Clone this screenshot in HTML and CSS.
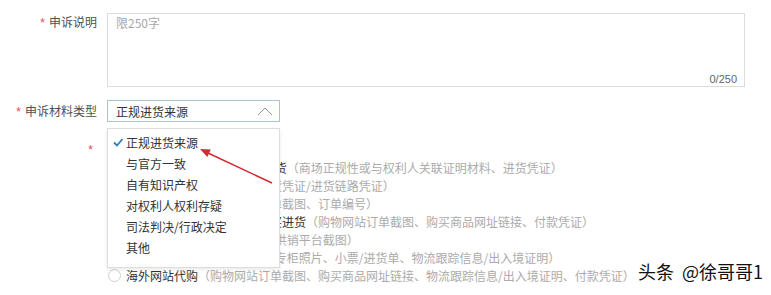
FILE: index.html
```html
<!DOCTYPE html>
<html lang="zh-CN">
<head>
<meta charset="utf-8">
<title>申诉</title>
<link rel="stylesheet" href="styles.css">
</head>
<body>
<div class="page">
  <div class="form-row row-desc">
    <label class="label"><span class="req">*</span>申诉说明</label>
    <div class="textarea">
      <span class="placeholder">限250字</span>
      <span class="count">0/250</span>
    </div>
  </div>

  <div class="form-row row-type">
    <label class="label"><span class="req">*</span>申诉材料类型</label>
    <div class="select-wrap">
      <div class="select">
        <span>正规进货来源</span>
        <svg class="chev" width="16" height="9" viewBox="0 0 16 9"><polyline points="1,8 8,1 15,8" fill="none" stroke="#9a9a9a" stroke-width="1"/></svg>
      </div>
      <ul class="dropdown">
        <li class="active"><svg class="check" width="10" height="9" viewBox="0 0 10 9"><path d="M1 4.5 L4 7.5 L9.5 1" fill="none" stroke="#2c7cc0" stroke-width="1.8"/></svg>正规进货来源</li>
        <li>与官方一致</li>
        <li>自有知识产权</li>
        <li>对权利人权利存疑</li>
        <li>司法判决/行政决定</li>
        <li>其他</li>
      </ul>
    </div>
  </div>

  <div class="form-row row-source">
    <label class="label"><span class="req">*</span></label>
    <div class="radios">
      <div class="radio-row"><span class="radio"></span><span class="opt">品牌方授权</span></div>
      <div class="radio-row"><span class="radio"></span><span class="opt">商场/专柜或品牌授权渠道进货</span><span class="desc">（商场正规性或与权利人关联证明材料、进货凭证）</span></div>
      <div class="radio-row"><span class="radio"></span><span class="opt">授权经销商代理商进货</span><span class="desc">（进货凭证/进货链路凭证）</span></div>
      <div class="radio-row"><span class="radio"></span><span class="opt">品牌官方旗舰店内购买</span><span class="desc">（订单截图、订单编号）</span></div>
      <div class="radio-row"><span class="radio"></span><span class="opt">国外品牌官方网站或专柜购买进货</span><span class="desc">（购物网站订单截图、购买商品网址链接、付款凭证）</span></div>
      <div class="radio-row"><span class="radio"></span><span class="opt">分销/代发平台进货</span><span class="desc">（分销或供销平台截图）</span></div>
      <div class="radio-row"><span class="radio"></span><span class="opt">海外/境外实体店购买</span><span class="desc">（海外专柜照片、小票/进货单、物流跟踪信息/出入境证明）</span></div>
      <div class="radio-row"><span class="radio"></span><span class="opt">海外网站代购</span><span class="desc">（购物网站订单截图、购买商品网址链接、物流跟踪信息/出入境证明、付款凭证）</span></div>
    </div>
  </div>

  <svg class="arrow" width="85" height="45" viewBox="0 0 85 45">
    <line x1="13" y1="10" x2="77" y2="40" stroke="#d42a2f" stroke-width="1.5"/>
    <polygon points="5,6 12.3,13.9 15.8,6.6" fill="#d42a2f"/>
  </svg>

  <div class="watermark">头条 @徐哥哥1</div>
</div>
</body>
</html>
```

FILE: styles.css
```css
html, body {
  margin: 0;
  padding: 0;
  background: #fff;
}

.page {
  position: relative;
  width: 771px;
  height: 295px;
  box-sizing: border-box;
  padding-top: 13px;
  overflow: hidden;
  font-family: "Noto Sans CJK SC", "Noto Sans", sans-serif;
  font-size: 12px;
  color: #333;
}

.form-row {
  display: flex;
}

.label {
  flex: none;
  width: 107px;
  box-sizing: border-box;
  padding-right: 10px;
  text-align: right;
  color: #505050;
}

.req {
  color: #e5484d;
  margin-right: 4px;
  font-family: "Liberation Sans", sans-serif;
}

.row-desc .label {
  line-height: 18px;
}

.textarea {
  position: relative;
  width: 638px;
  height: 74px;
  box-sizing: border-box;
  border: 1px solid #dcdcdc;
  padding: 0 8px;
}

.placeholder {
  color: #a8a8a8;
  line-height: 16px;
}

.count {
  position: absolute;
  right: 7px;
  bottom: 1px;
  font-family: "Liberation Sans", sans-serif;
  font-size: 11px;
  line-height: 12px;
  color: #666;
}

.row-type {
  margin-top: 13px;
}

.row-type .label {
  line-height: 22px;
}

.select-wrap {
  position: relative;
}

.select {
  width: 173px;
  height: 22px;
  box-sizing: border-box;
  border: 1px solid #a9c3d4;
  padding: 0 6px 0 8px;
  display: flex;
  align-items: center;
  justify-content: space-between;
  color: #333;
}

.chev {
  display: block;
}

.dropdown {
  position: absolute;
  left: 0;
  top: 28px;
  z-index: 2;
  width: 173px;
  box-sizing: border-box;
  margin: 0;
  padding: 3px 0 9px;
  list-style: none;
  background: #fff;
  border: 1px solid #dddddd;
  box-shadow: 0 2px 4px rgba(0, 0, 0, 0.08);
}

.dropdown li {
  position: relative;
  line-height: 21px;
  padding-left: 18px;
  color: #333;
  white-space: nowrap;
}

.check {
  position: absolute;
  left: 5px;
  top: 6px;
}

.row-source {
  margin-top: 17px;
}

.row-source .label {
  line-height: 18px;
}

.radios {
  display: flex;
  flex-direction: column;
}

.radio-row {
  display: flex;
  align-items: center;
  height: 18px;
  white-space: nowrap;
}

.radio {
  flex: none;
  width: 13px;
  height: 13px;
  box-sizing: border-box;
  border: 1px solid #cfcfcf;
  border-radius: 50%;
  margin-left: 1px;
  margin-right: 5px;
}

.opt {
  color: #333;
}

.desc {
  color: #ababab;
}

.arrow {
  position: absolute;
  left: 195px;
  top: 143px;
  z-index: 3;
}

.watermark {
  position: absolute;
  right: 8px;
  top: 259px;
  z-index: 3;
  background: #fff;
  padding-left: 10px;
  font-size: 18px;
  line-height: 24px;
  word-spacing: 4px;
  color: #111;
}
```
